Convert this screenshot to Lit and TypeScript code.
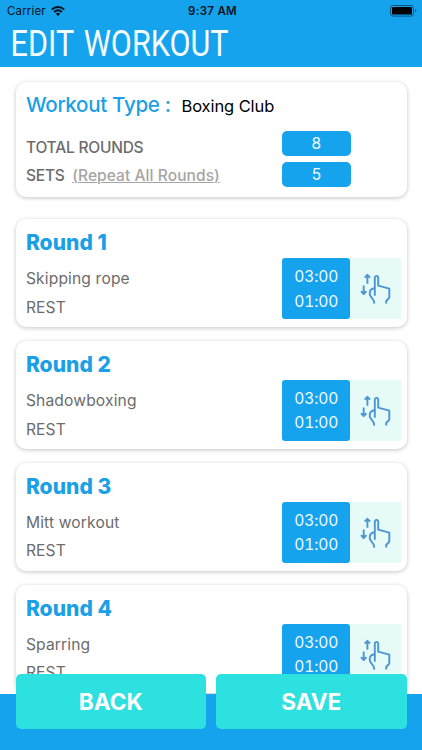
import { LitElement, html, css, svg } from "lit";
import { customElement, property } from "lit/decorators.js";

const wifi = svg`<svg width="14" height="10" viewBox="0 0 14 10"><g fill="none" stroke="#04121c" stroke-width="2"><path d="M.8 3.600C4.300.2 9.700.2 13.200 3.600"/><path d="M3.100 6C5.400 3.800 8.600 3.800 10.900 6"/></g><path d="M7 10 4.800 7.800Q7 5.900 9.200 7.800Z" fill="#04121c"/></svg>`;

const battery = svg`<svg width="27" height="12" viewBox="0 0 27 12"><rect x=".5" y=".5" width="23" height="10.600" rx="2.600" fill="none" stroke="#0b5280" stroke-width="1"/><rect x="2" y="2" width="20" height="7.600" rx="1.200" fill="#000"/><path d="M25 4v3.600q1.300-.5 1.300-1.800T25 4Z" fill="#0b5280"/></svg>`;

const drag = svg`<svg width="32" height="32" viewBox="0 0 32 32" fill="none" stroke="#4a95d6" stroke-width="1.9" stroke-linejoin="round"><path d="M7.400 10.700V1.800M4.700 4.600 7.400 1.800 10.100 4.600"/><path d="M3.700 12.500V21M1 18.200 3.700 21 6.400 18.200"/><path d="M14.800 22.800V4.800C14.800 2.200 18.200 2.200 18.200 4.800V12.700L29.300 15.600V24.600L26.200 28V30.600"/><path d="M14.800 15.300C11.500 15.700 9.800 17.200 9.800 19.500V22L13.800 27.800L14.300 30.600"/></svg>`;

@customElement("round-card")
class RoundCard extends LitElement {
  @property({ type: Number }) num = 1;
  @property() name = "";
  @property() work = "03:00";
  @property() rest = "01:00";

  static styles = css`
    :host {
      display: flex;
      justify-content: space-between;
      box-sizing: border-box;
      height: 108px;
      padding: 11px 6px 0 10.400px;
      border-radius: 10px;
      background: #fff;
      box-shadow: 0 1px 4px rgba(0, 0, 0, 0.24);
    }
    .title {
      height: 26px;
      line-height: 26px;
      margin-bottom: 8.700px;
      font-size: 21px;
      font-weight: 800;
      letter-spacing: 0.05px;
      color: #1b9fe6;
    }
    .line {
      height: 28.5px;
      line-height: 28.5px;
      font-size: 15.6px;
      letter-spacing: 0.15px;
      color: #6c6c6c;
    }
    .right {
      display: flex;
      height: 60.7px;
      margin-top: 28px;
    }
    .times {
      width: 68.4px;
      box-sizing: border-box;
      padding-top: 6.500px;
      border-radius: 3px;
      background: #16a3ed;
      color: #effaff;
      font-size: 15.6px;
      font-variant-numeric: tabular-nums;
      letter-spacing: -0.1px;
      line-height: 24.6px;
      text-align: center;
    }
    .grip {
      display: flex;
      box-sizing: border-box;
      width: 50.3px;
      padding: 14.500px 0 0 10px;
      background: #e6fbf7;
    }
  `;

  render() {
    return html`<div>
        <div class="title">Round ${this.num}</div>
        <div class="line">${this.name}</div>
        <div class="line">REST</div>
      </div>
      <div class="right">
        <div class="times"><div>${this.work}</div><div>${this.rest}</div></div>
        <div class="grip">${drag}</div>
      </div>`;
  }
}

@customElement("app-root")
class AppRoot extends LitElement {
  static styles = css`
    :host {
      display: block;
      position: relative;
      height: 750px;
      overflow: hidden;
      background: #fff;
      font-family: Inter, "Liberation Sans", sans-serif;
      white-space: nowrap;
    }
    header {
      box-sizing: border-box;
      height: 66.500px;
      background: #16a3ed;
    }
    .status {
      display: grid;
      grid-template-columns: 1fr auto 1fr;
      align-items: center;
      height: 22px;
      padding: 0 5px 0 7px;
      font-size: 11.5px;
      color: #04121c;
    }
    .carrier {
      display: flex;
      align-items: center;
      gap: 5.500px;
      letter-spacing: 0.15px;
    }
    .clock {
      padding-left: 1px;
      font-weight: 600;
      letter-spacing: 0.3px;
    }
    .battery {
      display: flex;
      justify-content: flex-end;
    }
    .heading {
      display: block;
    }
    .heading text {
      font-family: Roboto, sans-serif;
      font-size: 36px;
      font-weight: 400;
      word-spacing: 3px;
      fill: #f4fcff;
    }
    main {
      display: flex;
      flex-direction: column;
      padding: 15.200px 15.300px 0 15.500px;
    }
    .summary {
      box-sizing: border-box;
      height: 115.5px;
      margin-bottom: 22.300px;
      padding: 10.400px 0 0 10.5px;
      border-radius: 10px;
      box-shadow: 0 1px 4px rgba(0, 0, 0, 0.24);
    }
    .type {
      display: flex;
      height: 26px;
      line-height: 26px;
    }
    .label {
      width: 155.5px;
      font-size: 20.6px;
      font-weight: 500;
      letter-spacing: -0.33px;
      color: #1b9fe6;
    }
    .value {
      padding-top: 0.600px;
      font-size: 16.5px;
      letter-spacing: -0.1px;
      color: #000;
    }
    .counts {
      display: flex;
      margin-top: 12.900px;
    }
    .names {
      width: 256.200px;
      padding-top: 2.700px;
      font-size: 15.5px;
      font-weight: 500;
      line-height: 28.5px;
      letter-spacing: -0.22px;
      color: #6c6c6c;
    }
    .repeat {
      margin-left: 7.500px;
      letter-spacing: 0.08px;
      color: #a5a5a5;
      text-decoration: underline;
      text-decoration-thickness: 1px;
    }
    .pills {
      display: grid;
      grid-template-rows: 25px 25px;
      gap: 5.700px;
    }
    .pill {
      width: 68.4px;
      border-radius: 5px;
      background: #16a3ed;
      color: #effaff;
      font-size: 15.5px;
      line-height: 25px;
      text-align: center;
    }
    .rounds {
      display: grid;
      gap: 13.900px;
    }
    .bottom {
      position: absolute;
      left: 0;
      right: 0;
      bottom: 0;
      height: 76.5px;
      box-sizing: border-box;
      display: grid;
      grid-template-columns: 190.5px 190.5px;
      gap: 10px;
      padding: 0 15.500px;
      background: linear-gradient(to bottom, transparent 20.3px, #16a3ed 20.3px);
    }
    .btn {
      height: 55.8px;
      border: 0;
      padding: 0;
      border-radius: 5px;
      background: #2ee1e1;
      color: #fff;
      font: 700 22.600px/56px Inter, sans-serif;
    }
  `;

  render() {
    const rounds = ["Skipping rope", "Shadowboxing", "Mitt workout", "Sparring"];
    return html`
      <header>
        <div class="status">
          <div class="carrier"><span>Carrier</span>${wifi}</div>
          <div class="clock">9:37 AM</div>
          <div class="battery">${battery}</div>
        </div>
        <svg class="heading" width="422" height="44"><text x="0" y="33.5" textLength="218" lengthAdjust="spacingAndGlyphs" transform="translate(10.600 0)">EDIT WORKOUT</text></svg>
      </header>
      <main>
        <section class="summary">
          <div class="type"><span class="label">Workout Type :</span><span class="value">Boxing Club</span></div>
          <div class="counts">
            <div class="names">
              <div>TOTAL ROUNDS</div>
              <div>SETS<span class="repeat">(Repeat All Rounds)</span></div>
            </div>
            <div class="pills"><div class="pill">8</div><div class="pill">5</div></div>
          </div>
        </section>
        <div class="rounds">
          ${rounds.map((name, i) => html`<round-card .num=${i + 1} .name=${name}></round-card>`)}
        </div>
      </main>
      <div class="bottom"><button class="btn">BACK</button><button class="btn">SAVE</button></div>
    `;
  }
}
